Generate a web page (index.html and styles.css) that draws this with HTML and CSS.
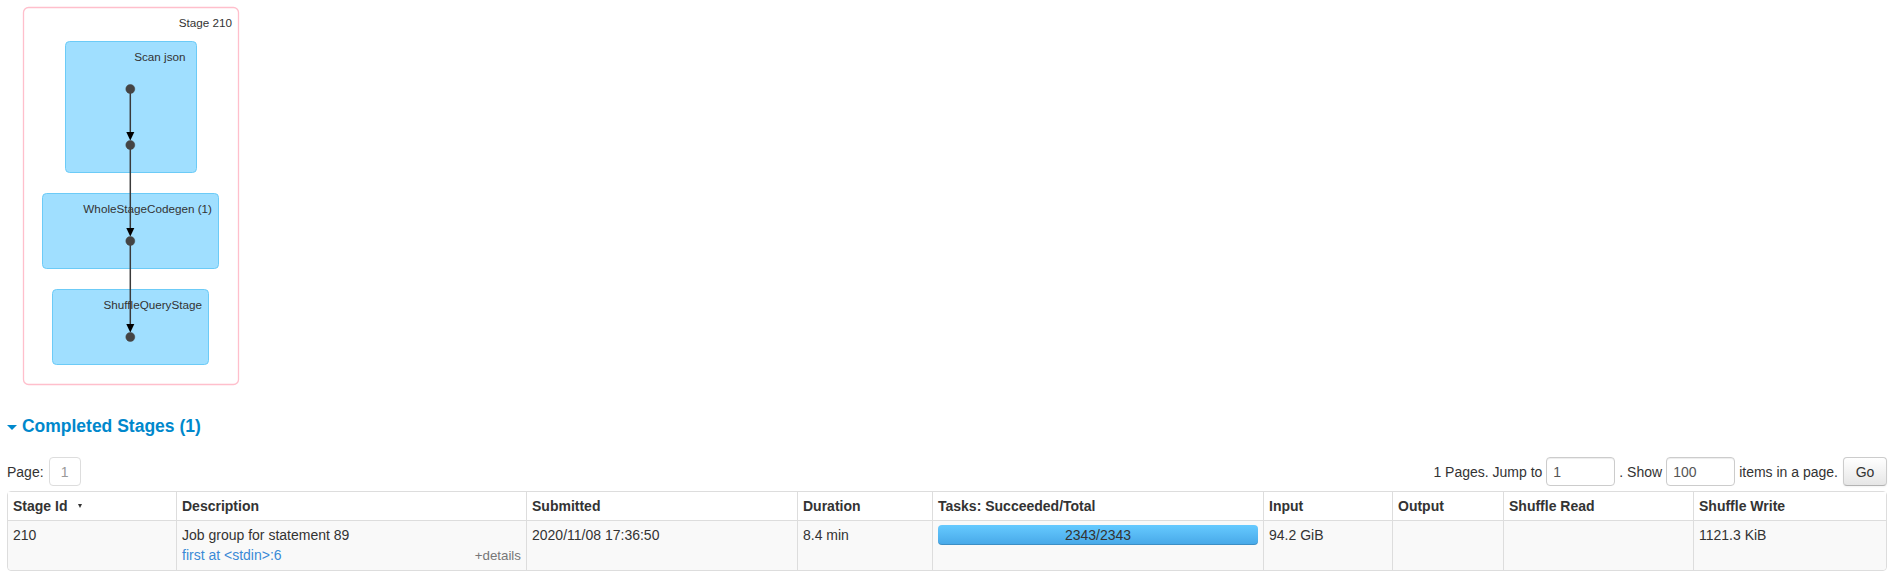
FILE: index.html
```html
<!DOCTYPE html>
<html>
<head>
<meta charset="utf-8">
<title>Stage DAG</title>
<link rel="stylesheet" href="styles.css">
</head>
<body>
<div class="page">
  <svg class="dag" width="240" height="396" viewBox="0 0 240 396">
    <rect class="stage-cluster" x="16.5" y="7.5" width="215" height="377" rx="5" ry="5"/>
    <text class="cluster-label" x="225" y="27">Stage 210</text>

    <rect class="op-cluster" x="58.5" y="41.5" width="131" height="131" rx="4" ry="4"/>
    <text class="cluster-label" x="178.5" y="61">Scan json</text>

    <rect class="op-cluster" x="35.5" y="193.5" width="176" height="75" rx="4" ry="4"/>
    <text class="cluster-label" x="205" y="213">WholeStageCodegen (1)</text>

    <rect class="op-cluster" x="45.5" y="289.5" width="156" height="75" rx="4" ry="4"/>
    <text class="cluster-label" x="195" y="309">ShuffleQueryStage</text>

    <line class="edge" x1="123.3" y1="89" x2="123.3" y2="134"/>
    <polygon class="arrow" points="119.3,132 127.3,132 123.3,140.5"/>
    <line class="edge" x1="123.3" y1="145" x2="123.3" y2="230"/>
    <polygon class="arrow" points="119.3,228 127.3,228 123.3,236.5"/>
    <line class="edge" x1="123.3" y1="241" x2="123.3" y2="326"/>
    <polygon class="arrow" points="119.3,324 127.3,324 123.3,332.5"/>

    <circle class="node" cx="123.3" cy="89" r="4.5"/>
    <circle class="node" cx="123.3" cy="145" r="4.5"/>
    <circle class="node" cx="123.3" cy="241" r="4.5"/>
    <circle class="node" cx="123.3" cy="337" r="4.5"/>
  </svg>

  <h4 class="section-title"><span class="arrow-open"></span> <a class="section-link" href="#">Completed Stages (1)</a></h4>

  <div class="pager">
    <div class="pager-left">
      <span>Page:</span>
      <span class="page-box">1</span>
    </div>
    <form class="pager-right">
      <span>1 Pages. Jump to</span>
      <input class="field" type="text" value="1">
      <span>. Show</span>
      <input class="field" type="text" value="100">
      <span>items in a page.</span>
      <button class="go-btn" type="button">Go</button>
    </form>
  </div>

  <table class="stages">
    <thead>
      <tr>
        <th class="c-id">Stage Id<span class="sort-arrow"></span></th>
        <th class="c-desc">Description</th>
        <th class="c-sub">Submitted</th>
        <th class="c-dur">Duration</th>
        <th class="c-tasks">Tasks: Succeeded/Total</th>
        <th class="c-in">Input</th>
        <th class="c-out">Output</th>
        <th class="c-sr">Shuffle Read</th>
        <th class="c-sw">Shuffle Write</th>
      </tr>
    </thead>
    <tbody>
      <tr>
        <td>210</td>
        <td>
          <div>Job group for statement 89</div>
          <div class="desc-line">
            <a class="name-link" href="#">first at &lt;stdin&gt;:6</a>
            <span class="expand-details">+details</span>
          </div>
        </td>
        <td>2020/11/08 17:36:50</td>
        <td>8.4 min</td>
        <td>
          <div class="progress"><span class="progress-text">2343/2343</span></div>
        </td>
        <td>94.2 GiB</td>
        <td></td>
        <td></td>
        <td>1121.3 KiB</td>
      </tr>
    </tbody>
  </table>
</div>
</body>
</html>
```
FILE: styles.css
```css
html, body {
  margin: 0;
  padding: 0;
  background: #ffffff;
}

body {
  font-family: "Liberation Sans", Arial, Helvetica, sans-serif;
  font-size: 14px;
  line-height: 20px;
  color: #333333;
}

.page {
  padding: 0 8px 0 7px;
}

/* ---------- DAG ---------- */
.dag {
  display: block;
}

.stage-cluster {
  fill: #ffffff;
  stroke: #ffbfcc;
  stroke-width: 1.3px;
}

.op-cluster {
  fill: #a0dfff;
  stroke: #6ccbf7;
  stroke-width: 1px;
}

.cluster-label {
  font-family: "Liberation Sans", Arial, sans-serif;
  font-size: 11.7px;
  fill: #333333;
  text-anchor: end;
}

.edge {
  stroke: #3a3a3a;
  stroke-width: 1.5px;
}

.arrow {
  fill: #000000;
}

.node {
  fill: #444444;
  stroke: #444444;
  stroke-width: 0.5px;
}

/* ---------- Section title ---------- */
.section-title {
  margin: 20px 0 0 0;
  font-size: 17.5px;
  line-height: 20px;
  font-weight: bold;
  color: #0088cc;
}

.arrow-open {
  display: inline-block;
  width: 0;
  height: 0;
  border-left: 5px solid transparent;
  border-right: 5px solid transparent;
  border-top: 5px solid #0088cc;
  margin-bottom: 2px;
}

.section-link {
  color: #0088cc;
  text-decoration: none;
}

/* ---------- Pager ---------- */
.pager {
  display: flex;
  justify-content: space-between;
  align-items: center;
  height: 29px;
  margin-top: 21px;
}

.pager-left,
.pager-right {
  display: flex;
  align-items: center;
  margin: 0;
}

.pager-left {
  gap: 5px;
}

.pager-right {
  gap: 4px;
}

.page-box {
  box-sizing: border-box;
  width: 32px;
  height: 29px;
  border: 1px solid #dddddd;
  border-radius: 4px;
  display: flex;
  align-items: center;
  justify-content: center;
  color: #999999;
}

.field {
  box-sizing: border-box;
  width: 69px;
  height: 29px;
  margin: 0;
  padding: 4px 6px;
  font-family: "Liberation Sans", Arial, sans-serif;
  font-size: 14px;
  line-height: 20px;
  color: #555555;
  background: #ffffff;
  border: 1px solid #cccccc;
  border-radius: 4px;
  box-shadow: inset 0 1px 1px rgba(0, 0, 0, 0.075);
  outline: none;
}

.go-btn {
  box-sizing: border-box;
  width: 44px;
  height: 29px;
  margin: 0 0 0 1px;
  padding: 0;
  font-family: "Liberation Sans", Arial, sans-serif;
  font-size: 14px;
  color: #333333;
  background: linear-gradient(to bottom, #ffffff, #e6e6e6);
  border: 1px solid #cccccc;
  border-bottom-color: #b3b3b3;
  border-radius: 4px;
  box-shadow: inset 0 1px 0 rgba(255, 255, 255, 0.2), 0 1px 2px rgba(0, 0, 0, 0.05);
}

/* ---------- Table ---------- */
.stages {
  width: 100%;
  margin-top: 5px;
  table-layout: fixed;
  border-collapse: separate;
  border-spacing: 0;
  border: 1px solid #dddddd;
  border-radius: 4px;
}

.stages th,
.stages td {
  box-sizing: border-box;
  padding: 4px 5px;
  text-align: left;
  vertical-align: top;
  line-height: 20px;
  border-left: 1px solid #dddddd;
}

.stages th:first-child,
.stages td:first-child {
  border-left: 0;
}

.stages th {
  font-weight: bold;
  background: #ffffff;
}

.stages td {
  border-top: 1px solid #dddddd;
  background: #f9f9f9;
}

.stages tbody tr:last-child td:first-child {
  border-bottom-left-radius: 4px;
}

.stages tbody tr:last-child td:last-child {
  border-bottom-right-radius: 4px;
}

.c-id { width: 168px; }
.c-desc { width: 350px; }
.c-sub { width: 271px; }
.c-dur { width: 135px; }
.c-tasks { width: 331px; }
.c-in { width: 129px; }
.c-out { width: 111px; }
.c-sr { width: 190px; }
.c-sw { width: auto; }

.sort-arrow {
  display: inline-block;
  width: 0;
  height: 0;
  margin-left: 11px;
  border-left: 2.5px solid transparent;
  border-right: 2.5px solid transparent;
  border-top: 4px solid #333333;
  vertical-align: 3px;
}

.desc-line {
  display: flex;
  justify-content: space-between;
  align-items: baseline;
}

.name-link {
  color: #3a8ad6;
  text-decoration: none;
}

.expand-details {
  font-size: 13.33px;
  color: #777777;
}

.progress {
  height: 20px;
  border-radius: 4px;
  background: linear-gradient(to bottom, #66caff, #47a8e8);
  box-shadow: inset 0 -1px 0 rgba(0, 0, 0, 0.15);
  text-align: center;
}

.progress-text {
  line-height: 20px;
  color: #333333;
}
```
